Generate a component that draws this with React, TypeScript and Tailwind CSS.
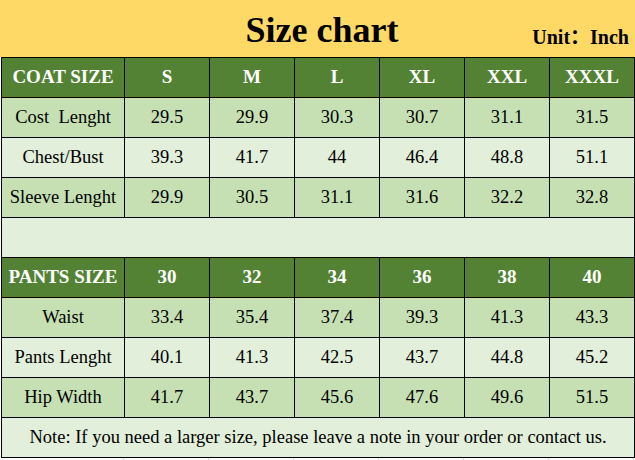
import React from 'react';

const coatSizes = ['S', 'M', 'L', 'XL', 'XXL', 'XXXL'];
const coatRows = [
  { label: 'Cost  Lenght', values: ['29.5', '29.9', '30.3', '30.7', '31.1', '31.5'] },
  { label: 'Chest/Bust', values: ['39.3', '41.7', '44', '46.4', '48.8', '51.1'] },
  { label: 'Sleeve Lenght', values: ['29.9', '30.5', '31.1', '31.6', '32.2', '32.8'] },
];

const pantsSizes = ['30', '32', '34', '36', '38', '40'];
const pantsRows = [
  { label: 'Waist', values: ['33.4', '35.4', '37.4', '39.3', '41.3', '43.3'] },
  { label: 'Pants Lenght', values: ['40.1', '41.3', '42.5', '43.7', '44.8', '45.2'] },
  { label: 'Hip Width', values: ['41.7', '43.7', '45.6', '47.6', '49.6', '51.5'] },
];

const serif = "font-['Liberation_Serif','Times_New_Roman',serif]";
const cell = `border border-black text-center align-middle p-0 ${serif}`;

function HeaderRow({ title, sizes }: { title: string; sizes: string[] }) {
  return (
    <tr className="h-[40px] bg-[#548235] text-white font-bold text-[19px]">
      <td className={cell}>{title}</td>
      {sizes.map((s) => (
        <td key={s} className={cell}>
          {s}
        </td>
      ))}
    </tr>
  );
}

function DataRow({ label, values, light }: { label: string; values: string[]; light: boolean }) {
  return (
    <tr className={`h-[40px] text-[18.5px] text-black ${light ? 'bg-[#E2EFDA]' : 'bg-[#C6E0B4]'}`}>
      <td className={`${cell} whitespace-pre`}>{label}</td>
      {values.map((v, i) => (
        <td key={i} className={cell}>
          {v}
        </td>
      ))}
    </tr>
  );
}

export default function App() {
  return (
    <div className={`w-[635px] h-[460px] bg-white overflow-hidden ${serif}`}>
      {/* Title bar */}
      <div className="h-[57px] bg-[#FFD966] grid grid-cols-[1fr_auto_1fr] items-end pb-[9px]">
        <div />
        <h1 className="text-[36px] leading-none font-bold text-black pl-[9px]">Size chart</h1>
        <div className="flex justify-end pr-[6px] pb-[1px] text-[20px] leading-none font-bold text-black font-['Liberation_Serif','Noto_Sans_CJK_SC',serif]">
          Unit：Inch
        </div>
      </div>

      <table className={`border-collapse table-fixed w-[633px] ml-px ${serif}`}>
        <colgroup>
          <col className="w-[123px]" />
          {coatSizes.map((s) => (
            <col key={s} className="w-[85px]" />
          ))}
        </colgroup>
        <tbody>
          <HeaderRow title="COAT SIZE" sizes={coatSizes} />
          {coatRows.map((r, i) => (
            <DataRow key={r.label} label={r.label} values={r.values} light={i % 2 === 1} />
          ))}
          <tr className="h-[40px] bg-[#E2EFDA]">
            <td colSpan={7} className="border border-black" />
          </tr>
          <HeaderRow title="PANTS SIZE" sizes={pantsSizes} />
          {pantsRows.map((r, i) => (
            <DataRow key={r.label} label={r.label} values={r.values} light={i % 2 === 1} />
          ))}
          <tr className="h-[40px] bg-[#E2EFDA]">
            <td colSpan={7} className={`${cell} text-[18.5px]`}>
              Note: If you need a larger size, please leave a note in your order or contact us.
            </td>
          </tr>
        </tbody>
      </table>

      {/* faint sheet gridlines below the table */}
      <div className="grid grid-cols-[123px_repeat(6,85px)] h-[4px] ml-px">
        {Array.from({ length: 7 }).map((_, i) => (
          <div key={i} className="border-r border-[#d9d9d9]" />
        ))}
      </div>
    </div>
  );
}
